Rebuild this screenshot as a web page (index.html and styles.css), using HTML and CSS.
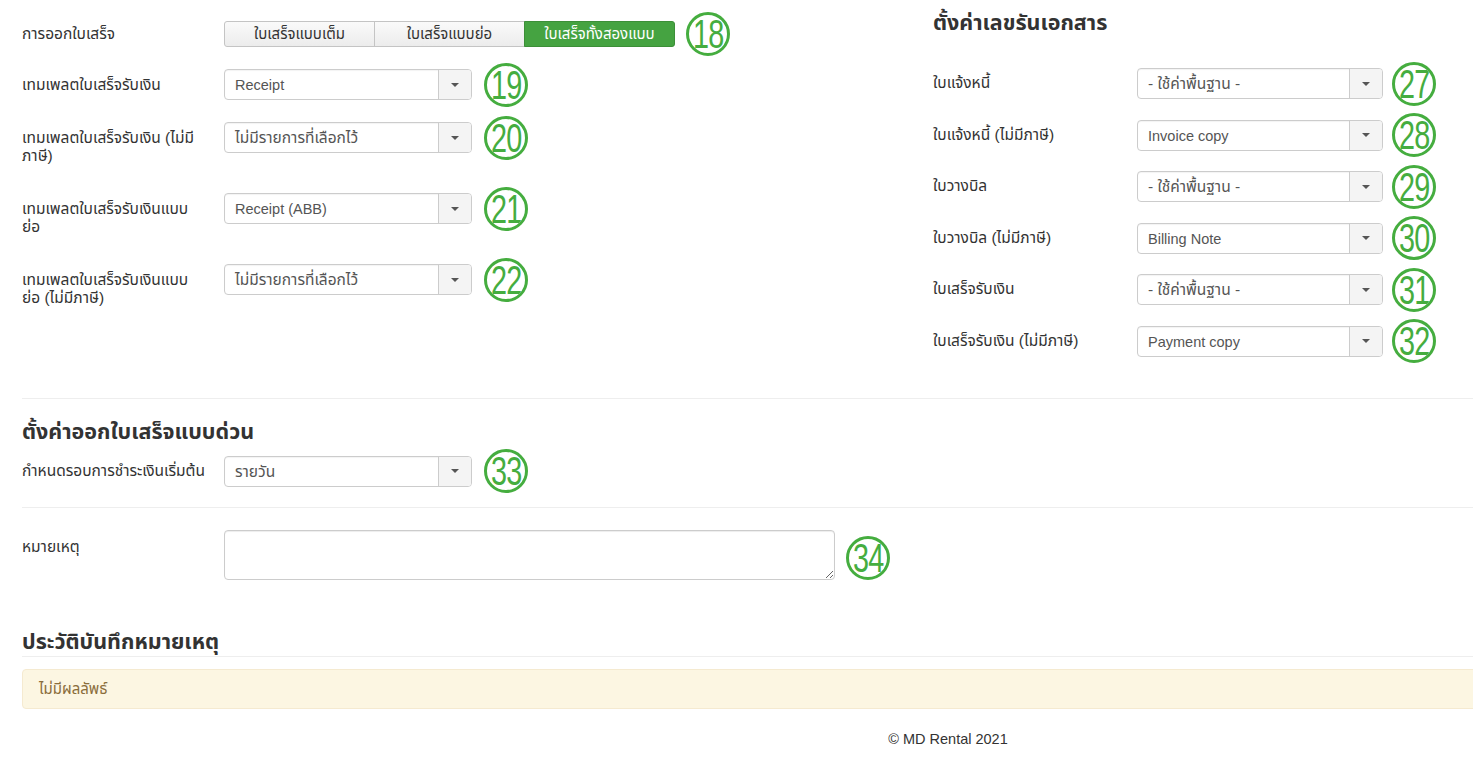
FILE: index.html
```html
<!DOCTYPE html>
<html lang="th">
<head>
<meta charset="utf-8">
<title>ตั้งค่าใบเสร็จ</title>
<link rel="stylesheet" href="styles.css">
</head>
<body>
<div class="page">
  <div class="cols">
    <div class="col col-left">
      <div class="row row-btn">
        <label class="lbl">การออกใบเสร็จ</label>
        <div class="ctrl">
          <div class="btn-group">
            <span class="btn">ใบเสร็จแบบเต็ม</span>
            <span class="btn">ใบเสร็จแบบย่อ</span>
            <span class="btn active">ใบเสร็จทั้งสองแบบ</span>
          </div>
          <span class="num"><span>18</span></span>
        </div>
      </div>
      <div class="row">
        <label class="lbl">เทมเพลตใบเสร็จรับเงิน</label>
        <div class="ctrl">
          <div class="select"><span class="val">Receipt</span><span class="arrow"><i></i></span></div>
          <span class="num"><span>19</span></span>
        </div>
      </div>
      <div class="row">
        <label class="lbl">เทมเพลตใบเสร็จรับเงิน (ไม่มีภาษี)</label>
        <div class="ctrl">
          <div class="select"><span class="val th">ไม่มีรายการที่เลือกไว้</span><span class="arrow"><i></i></span></div>
          <span class="num"><span>20</span></span>
        </div>
      </div>
      <div class="row">
        <label class="lbl">เทมเพลตใบเสร็จรับเงินแบบย่อ</label>
        <div class="ctrl">
          <div class="select"><span class="val">Receipt (ABB)</span><span class="arrow"><i></i></span></div>
          <span class="num"><span>21</span></span>
        </div>
      </div>
      <div class="row">
        <label class="lbl">เทมเพลตใบเสร็จรับเงินแบบย่อ (ไม่มีภาษี)</label>
        <div class="ctrl">
          <div class="select"><span class="val th">ไม่มีรายการที่เลือกไว้</span><span class="arrow"><i></i></span></div>
          <span class="num"><span>22</span></span>
        </div>
      </div>
    </div>
    <div class="col col-right">
      <h3 class="heading">ตั้งค่าเลขรันเอกสาร</h3>
      <div class="rrow">
        <label class="rlbl">ใบแจ้งหนี้</label>
        <div class="select rsel"><span class="val th">- ใช้ค่าพื้นฐาน -</span><span class="arrow"><i></i></span></div>
        <span class="num rnum"><span>27</span></span>
      </div>
      <div class="rrow">
        <label class="rlbl">ใบแจ้งหนี้ (ไม่มีภาษี)</label>
        <div class="select rsel"><span class="val">Invoice copy</span><span class="arrow"><i></i></span></div>
        <span class="num rnum"><span>28</span></span>
      </div>
      <div class="rrow">
        <label class="rlbl">ใบวางบิล</label>
        <div class="select rsel"><span class="val th">- ใช้ค่าพื้นฐาน -</span><span class="arrow"><i></i></span></div>
        <span class="num rnum"><span>29</span></span>
      </div>
      <div class="rrow">
        <label class="rlbl">ใบวางบิล (ไม่มีภาษี)</label>
        <div class="select rsel"><span class="val">Billing Note</span><span class="arrow"><i></i></span></div>
        <span class="num rnum"><span>30</span></span>
      </div>
      <div class="rrow">
        <label class="rlbl">ใบเสร็จรับเงิน</label>
        <div class="select rsel"><span class="val th">- ใช้ค่าพื้นฐาน -</span><span class="arrow"><i></i></span></div>
        <span class="num rnum"><span>31</span></span>
      </div>
      <div class="rrow">
        <label class="rlbl">ใบเสร็จรับเงิน (ไม่มีภาษี)</label>
        <div class="select rsel"><span class="val">Payment copy</span><span class="arrow"><i></i></span></div>
        <span class="num rnum"><span>32</span></span>
      </div>
    </div>
  </div>

  <hr class="rule rule-1">
  <h3 class="heading heading-quick">ตั้งค่าออกใบเสร็จแบบด่วน</h3>
  <div class="row row-quick">
    <label class="lbl lbl-nowrap">กำหนดรอบการชำระเงินเริ่มต้น</label>
    <div class="ctrl">
      <div class="select"><span class="val th">รายวัน</span><span class="arrow"><i></i></span></div>
      <span class="num"><span>33</span></span>
    </div>
  </div>
  <hr class="rule rule-2">
  <div class="row row-note">
    <label class="lbl">หมายเหตุ</label>
    <div class="ctrl ctrl-top">
      <textarea class="textarea"></textarea>
      <span class="num num-note"><span>34</span></span>
    </div>
  </div>

  <h3 class="heading heading-history">ประวัติบันทึกหมายเหตุ</h3>
  <div class="alert">ไม่มีผลลัพธ์</div>
  <footer class="footer">© MD Rental 2021</footer>
</div>
</body>
</html>
```

FILE: styles.css
```css
html, body {
  margin: 0;
  padding: 0;
  background: #fff;
  overflow-x: hidden;
}
body {
  font-family: "Liberation Sans", "Noto Sans Thai", "Noto Sans", sans-serif;
  font-size: 14px;
  color: #333;
}
.page {
  width: 1852px;
  padding: 0 22px;
}
.cols {
  display: grid;
  grid-template-columns: 911px 911px;
}
.col-left {
  padding-top: 21px;
}
.row {
  display: flex;
  align-items: flex-start;
  margin-bottom: 21px;
}
.row-btn {
  margin-bottom: 22px;
}
.lbl {
  width: 182px;
  padding: 7px 20px 7px 0;
  line-height: 18px;
  font-size: 15.5px;
  color: #333;
  box-sizing: content-box;
  flex: none;
}
.row-btn .lbl {
  padding-top: 4px;
  padding-bottom: 4px;
}
.lbl-nowrap {
  white-space: nowrap;
}
.ctrl {
  display: flex;
  align-items: center;
}
.ctrl-top {
  align-items: flex-start;
}
.btn-group {
  display: flex;
  height: 26px;
}
.btn {
  width: 151px;
  box-sizing: border-box;
  height: 26px;
  line-height: 24px;
  text-align: center;
  font-size: 15px;
  color: #333;
  background: linear-gradient(#fafafa, #ececec);
  border: 1px solid #c4c4c4;
  margin-left: -1px;
}
.btn:first-child {
  margin-left: 0;
  border-radius: 3px 0 0 3px;
}
.btn.active {
  background: #45a341;
  border-color: #3c8f38;
  color: #fff;
  border-radius: 0 3px 3px 0;
}
.select {
  display: flex;
  width: 248px;
  height: 31px;
  box-sizing: border-box;
  border: 1px solid #ccc;
  border-radius: 4px;
  background: #fff;
  box-shadow: inset 0 1px 1px rgba(0,0,0,0.05);
}
.select .val {
  flex: 1;
  padding-left: 10px;
  line-height: 30px;
  font-size: 14.5px;
  color: #555;
  white-space: nowrap;
  overflow: hidden;
}
.select .val.th {
  font-size: 15.5px;
  line-height: 29px;
}
.select .arrow {
  width: 32px;
  border-left: 1px solid #ccc;
  background: #f4f4f4;
  border-radius: 0 3px 3px 0;
  display: flex;
  align-items: center;
  justify-content: center;
}
.select .arrow i {
  display: block;
  width: 0;
  height: 0;
  border-left: 4px solid transparent;
  border-right: 4px solid transparent;
  border-top: 4px solid #555;
}
.num {
  width: 44px;
  height: 44px;
  box-sizing: border-box;
  border: 3px solid #45ad3f;
  border-radius: 50%;
  margin-left: 12px;
  margin-top: -9px;
  margin-bottom: -9px;
  display: flex;
  align-items: center;
  justify-content: center;
  overflow: hidden;
  color: #45ad3f;
  flex: none;
}
.num span {
  display: block;
  font-family: "Liberation Sans", sans-serif;
  font-size: 40px;
  line-height: 40px;
  transform: scaleX(0.72);
  letter-spacing: -1px;
}
.row-btn .num {
  margin-left: 11px;
}
.heading {
  margin: 0;
  font-size: 21.5px;
  font-weight: bold;
  color: #333;
  line-height: 26px;
}
.col-right .heading {
  margin-top: 10px;
  margin-bottom: 32px;
}
.rrow {
  display: flex;
  align-items: center;
  height: 31px;
  margin-bottom: 20.6px;
}
.rlbl {
  width: 204px;
  font-size: 15.5px;
  color: #333;
}
.select.rsel {
  width: 246px;
}
.num.rnum {
  margin-left: 9px;
  margin-top: 0;
  margin-bottom: 0;
}
.rule {
  border: 0;
  border-top: 1px solid #eee;
  margin: 0;
  width: 1852px;
}
.rule-1 {
  margin-top: 20px;
}
.heading-quick {
  margin-top: 20px;
  margin-bottom: 11px;
}
.row-quick {
  margin-bottom: 20px;
}
.row-quick .lbl {
  padding-top: 6px;
}
.row-note {
  margin-top: 22px;
  margin-bottom: 0;
}
.row-note .lbl {
  padding-top: 8px;
}
.textarea {
  width: 611px;
  height: 50px;
  box-sizing: border-box;
  border: 1px solid #ccc;
  border-radius: 4px;
  box-shadow: inset 0 1px 1px rgba(0,0,0,0.075);
  resize: vertical;
  font-family: inherit;
  margin: 0;
  display: block;
}
.num-note {
  margin-left: 11px;
  margin-top: 6px;
  margin-bottom: 0;
}
.heading-history {
  margin-top: 49px;
  padding-bottom: 1px;
  border-bottom: 1px solid #eee;
}
.alert {
  margin-top: 12px;
  height: 40px;
  box-sizing: border-box;
  background: #fcf6e2;
  border: 1px solid #f5ead0;
  border-radius: 4px;
  color: #8a6d3b;
  font-size: 15px;
  line-height: 38px;
  padding-left: 16px;
}
.footer {
  text-align: center;
  margin-top: 20px;
  line-height: 20px;
  font-size: 14.5px;
  color: #333;
}
```
